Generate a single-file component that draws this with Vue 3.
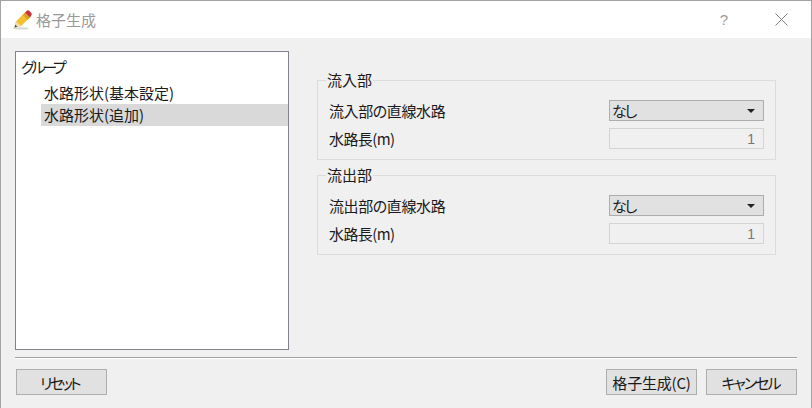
<script setup>
const groups = [
  { title: "流入部", label: "流入部の直線水路" },
  { title: "流出部", label: "流出部の直線水路" },
];
</script>

<template>
  <div class="dialog">
    <header class="title-bar">
      <svg class="app-icon" width="20" height="20" viewBox="0 0 20 20">
        <ellipse cx="8" cy="18.4" rx="8" ry="1.2" fill="#d8d8d8" />
        <path d="M1.5 17.5 L3 11.5 L12 2.5 L17 7.5 L8 16 Z" fill="#f2c230" />
        <path d="M12 2.5 L17 7.5 L14.5 9.8 L9.6 4.9 Z" fill="#e0a020" />
        <path d="M1.5 17.5 L3 11.5 L8 16 Z" fill="#f3dcb0" />
        <path d="M1.5 17.5 L2.2 14.8 L4.4 16.8 Z" fill="#444" />
        <path d="M12 2.5 L14.2 0.6 Q15.2 0 16.2 0.7 L18.4 2.9 Q19.2 4 18.4 5.2 L17 7.5 Z" fill="#c8323a" />
      </svg>
      <span class="title">格子生成</span>
      <span class="help">?</span>
      <svg class="close" width="13" height="13" viewBox="0 0 13 13">
        <path d="M0.5 0.5 L12.5 12.5 M12.5 0.5 L0.5 12.5" stroke="#808080" stroke-width="1" fill="none" />
      </svg>
    </header>

    <div class="content">
      <div class="main">
        <div class="tree">
          <div class="tree-root">グループ</div>
          <div class="tree-item">水路形状(基本設定)</div>
          <div class="tree-item selected">水路形状(追加)</div>
        </div>

        <div class="panel">
          <fieldset v-for="g in groups" :key="g.title" class="group">
            <legend>{{ g.title }}</legend>
            <div class="row">
              <span class="label">{{ g.label }}</span>
              <div class="combo">
                <span class="kana">なし</span>
                <i class="arrow"></i>
              </div>
            </div>
            <div class="row">
              <span class="label unit">水路長(m)</span>
              <div class="number">1</div>
            </div>
          </fieldset>
        </div>
      </div>

      <div class="separator"></div>

      <footer class="buttons">
        <button><span class="reset">リセット</span></button>
        <span class="spacer"></span>
        <button>格子生成(C)</button>
        <button><span class="cancel">キャンセル</span></button>
      </footer>
    </div>
  </div>
</template>

<style>
html,
body {
  margin: 0;
  background: #f0f0f0;
}
</style>

<style scoped>
.dialog {
  box-sizing: border-box;
  width: 812px;
  height: 408px;
  display: flex;
  flex-direction: column;
  border: 1px solid #a3a3a3;
  border-bottom: none;
  background: #f0f0f0;
  font-family: "Noto Sans CJK JP", "Noto Sans", sans-serif;
  font-size: 15px;
  font-feature-settings: "palt";
  color: #1a1a1a;
  overflow: hidden;
}
.title-bar {
  height: 37px;
  flex: none;
  display: flex;
  align-items: center;
  background: #fff;
  padding-left: 12px;
}
.app-icon {
  margin-right: 3px;
}
.title {
  color: #999;
  flex: 1;
}
.help {
  color: #999;
  font-size: 15px;
  font-family: "Liberation Sans", sans-serif;
  margin-right: 47px;
}
.close {
  margin-right: 23px;
}
.content {
  flex: 1;
  display: flex;
  flex-direction: column;
  padding: 13px 14px 0;
}
.main {
  display: flex;
  height: 299px;
}
.tree {
  box-sizing: border-box;
  width: 274px;
  flex: none;
  background: #fff;
  border: 1px solid #82828c;
  padding-top: 4px;
}
.tree-root {
  height: 26px;
  line-height: 22px;
  padding-left: 5px;
  letter-spacing: -3.2px;
}
.tree-item {
  height: 22px;
  line-height: 22px;
  padding-left: 28px;
}
.tree-item.selected {
  background: #d9d9d9;
  margin-left: 25px;
  padding-left: 3px;
}
.panel {
  flex: 1;
  padding: 20px 21px 0 28px;
  display: flex;
  flex-direction: column;
  gap: 6px;
}
.group {
  box-sizing: border-box;
  height: 89px;
  margin: 0;
  padding: 0 11px;
  border: 1px solid #dcdcdc;
  min-width: 0;
}
.group legend {
  padding: 0 1px;
  margin-left: -3px;
  line-height: 18px;
}
.row {
  height: 21px;
  display: flex;
  align-items: center;
  justify-content: space-between;
  margin-bottom: 7px;
}
.group legend + .row {
  margin-top: 11px;
}
.label {
  letter-spacing: -0.4px;
}
.label.unit {
  letter-spacing: -0.6px;
}
.kana {
  letter-spacing: -2px;
}
.combo,
.number {
  box-sizing: border-box;
  width: 155px;
  height: 21px;
  display: flex;
  align-items: center;
}
.combo {
  background: #e1e1e1;
  border: 1px solid #adadad;
  padding: 0 8px 0 2px;
  justify-content: space-between;
}
.arrow {
  width: 0;
  height: 0;
  border-left: 4px solid transparent;
  border-right: 4px solid transparent;
  border-top: 4px solid #222;
}
.number {
  background: #f0f0f0;
  border: 1px solid #d4d4d4;
  justify-content: flex-end;
  padding-right: 8px;
  color: #777;
  font-family: "Liberation Sans", sans-serif;
  font-size: 14px;
}
.separator {
  height: 1px;
  background: #a0a0a0;
  border-bottom: 1px solid #fff;
  margin-top: 7px;
}
.buttons {
  display: flex;
  gap: 9px;
  margin-top: 10px;
  padding: 0 0 0 1px;
}
.spacer {
  flex: 1;
}
.reset {
  letter-spacing: -2.8px;
  padding-right: 4px;
}
.cancel {
  letter-spacing: -2px;
  padding-right: 2px;
}
button {
  width: 91px;
  height: 26px;
  padding: 0;
  background: #e1e1e1;
  border: 1px solid #adadad;
  font: inherit;
  font-feature-settings: "palt";
  letter-spacing: -0.2px;
  color: inherit;
}
</style>
